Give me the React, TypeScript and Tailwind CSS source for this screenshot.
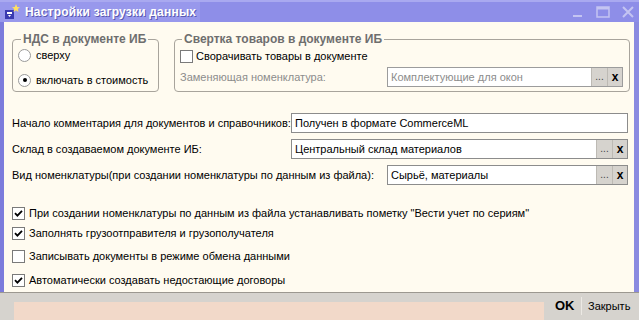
import React from "react";

const font = { fontFamily: '"Liberation Sans", Arial, sans-serif' };

function Check({ checked }: { checked: boolean }) {
  return (
    <span className="w-[13px] h-[13px] border border-[#7a7a7a] bg-white flex items-center justify-center shrink-0">
      {checked && (
        <svg width="9" height="9" viewBox="0 0 9 9">
          <path d="M1 4.2 L3.4 6.6 L8 1.8" stroke="#000" strokeWidth="1.8" fill="none" />
        </svg>
      )}
    </span>
  );
}

function Radio({ checked }: { checked: boolean }) {
  return (
    <span className="w-[13px] h-[13px] rounded-full border border-[#9a9a9a] bg-white flex items-center justify-center shrink-0">
      {checked && <span className="w-[4px] h-[4px] rounded-full bg-black" />}
    </span>
  );
}

function Btns() {
  return (
    <div className="flex h-full">
      <div className="w-[16px] h-full bg-[#d6d3ce] border-l border-[#bdbab4] flex items-end justify-center pb-[4px] text-[10px] leading-none text-[#444]">...</div>
      <div className="w-[15px] h-full bg-[#d6d3ce] border-l border-[#bdbab4] flex items-center justify-center text-[12px] font-bold leading-none text-black">x</div>
    </div>
  );
}

export default function App() {
  return (
    <div className="w-[639px] h-[320px] flex flex-col bg-[#d6d3ce] overflow-hidden text-[11px] text-black whitespace-nowrap" style={font}>
      {/* Title bar */}
      <div className="h-[22px] bg-[#8e8ee8] border-t-2 border-[#a9a9f0] flex items-center shrink-0">
        <div className="flex items-center h-full pl-[3px] pr-[4px] bg-[#9898ec]">
          <svg width="18" height="16" viewBox="0 0 18 16">
            <rect x="2" y="6" width="9" height="9" fill="#3a3ab0" />
            <rect x="4" y="8" width="5" height="2" fill="#ffffff" />
            <path d="M5 11 L8 11 L6.5 13 Z" fill="#ffffff" />
            <path d="M13 0 L14.2 3 L17 3.3 L14.8 5 L15.5 8 L13 6.3 L10.5 8 L11.2 5 L9 3.3 L11.8 3 Z" fill="#ffe060" />
          </svg>
          <span className="ml-[4px] text-white font-bold text-[12px] tracking-[0.2px]" style={{ textShadow: "1px 1px 0 #5a5ab0" }}>
            Настройки загрузки данных
          </span>
        </div>
        <div className="flex-1" />
        <div className="flex items-center gap-[10px] pr-[4px]">
          <svg width="14" height="14" viewBox="0 0 14 14"><rect x="2" y="10" width="9" height="2" fill="#c4c4f2" /></svg>
          <svg width="16" height="16" viewBox="0 0 16 16"><rect x="2" y="3" width="12" height="10" fill="none" stroke="#c4c4f2" strokeWidth="1.5" /><rect x="2" y="3" width="12" height="2.5" fill="#c4c4f2" /></svg>
          <svg width="14" height="14" viewBox="0 0 14 14"><path d="M2 2 L12 12 M12 2 L2 12" stroke="#c4c4f2" strokeWidth="2" /></svg>
        </div>
      </div>

      {/* Body */}
      <div className="flex h-[270px] shrink-0">
        <div className="w-[4px] bg-[#7c7cdc]" />
        <div className="flex-1 bg-[#fffbf0] pl-[8px] pr-[4px] pt-[10px] flex flex-col">
          <div className="flex gap-[15px]">
            <fieldset className="w-[147px] h-[60px] border border-[#a8a49c] rounded-[4px] px-[6px] pb-[4px]">
              <legend className="px-[2px] ml-[2px] font-bold text-[12px] text-[#6e6e6e] leading-[14px]">НДС в документе ИБ</legend>
              <div className="flex items-center gap-[5px] h-[18px] ml-[-1px]">
                <Radio checked={false} />
                <span>сверху</span>
              </div>
              <div className="flex items-center gap-[5px] h-[18px] mt-[7px] ml-[-1px]">
                <Radio checked={true} />
                <span>включать в стоимость</span>
              </div>
            </fieldset>
            <fieldset className="flex-1 h-[60px] border border-[#a8a49c] rounded-[4px] pl-[5px] pr-[6px]">
              <legend className="px-[2px] ml-[2px] font-bold text-[12px] text-[#6e6e6e] leading-[14px]">Свертка товаров в документе ИБ</legend>
              <div className="flex items-center gap-[3px] h-[18px] mt-[1px]">
                <Check checked={false} />
                <span>Сворачивать товары в документе</span>
              </div>
              <div className="flex items-center h-[20px] mt-[2px]">
                <span className="w-[207px] text-[#8c8c8c]">Заменяющая номенклатура:</span>
                <div className="flex-1 h-[20px] border border-[#9c9c9c] bg-white flex items-center">
                  <span className="flex-1 pl-[3px] text-[#8c8c8c]">Комплектующие для окон</span>
                  <Btns />
                </div>
              </div>
            </fieldset>
          </div>

          <div className="flex flex-col gap-[6px] mt-[21px]">
            <div className="flex items-center h-[20px]">
              <span className="w-[279px]">Начало комментария для документов и справочников:</span>
              <div className="w-[337px] h-[20px] border border-[#8c8c8c] bg-white flex items-center pl-[3px]">Получен в формате CommerceML</div>
            </div>
            <div className="flex items-center h-[20px]">
              <span className="w-[279px]">Склад в создаваемом документе ИБ:</span>
              <div className="w-[337px] h-[20px] border border-[#8c8c8c] bg-white flex items-center">
                <span className="flex-1 pl-[3px]">Центральный склад материалов</span>
                <Btns />
              </div>
            </div>
            <div className="flex items-center h-[20px]">
              <span className="w-[375px]">Вид номенклатуры(при создании номенклатуры по данным из файла):</span>
              <div className="w-[241px] h-[20px] border border-[#8c8c8c] bg-white flex items-center">
                <span className="flex-1 pl-[3px]">Сырьё, материалы</span>
                <Btns />
              </div>
            </div>
          </div>

          <div className="flex flex-col mt-[20px]">
            <div className="flex items-center gap-[4px] h-[16px]">
              <Check checked={true} />
              <span>При создании номенклатуры по данным из файла устанавливать пометку "Вести учет по сериям"</span>
            </div>
            <div className="flex items-center gap-[4px] h-[16px] mt-[4px]">
              <Check checked={true} />
              <span>Заполнять грузоотправителя и грузополучателя</span>
            </div>
            <div className="flex items-center gap-[4px] h-[16px] mt-[7px]">
              <Check checked={false} />
              <span>Записывать документы в режиме обмена данными</span>
            </div>
            <div className="flex items-center gap-[4px] h-[16px] mt-[8px]">
              <Check checked={true} />
              <span>Автоматически создавать недостающие договоры</span>
            </div>
          </div>
        </div>
        <div className="w-[5px] bg-[#8a8ae0]" />
      </div>

      {/* Bottom bar */}
      <div className="flex-1 border-t border-[#9c9890] flex">
        <div className="w-[14px]" />
        <div className="w-[530px] mt-[9px] bg-[#f2d9c9]" />
        <div className="flex items-center pl-[11px] pb-[1px]">
          <span className="font-bold text-[13px] w-[22px]">OK</span>
          <span className="w-px h-[18px] bg-[#ece9e4] mx-[4px]" />
          <span className="ml-[2px] text-[11px]">Закрыть</span>
        </div>
      </div>
    </div>
  );
}
